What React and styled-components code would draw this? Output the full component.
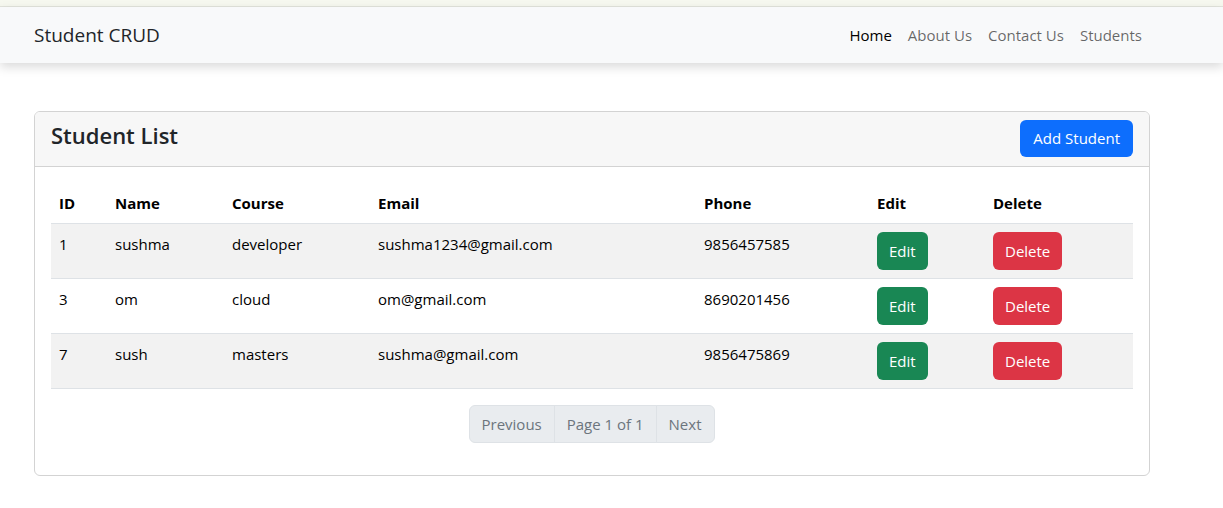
import React from 'react'
import styled, { createGlobalStyle } from 'styled-components'

const students = [
  { id: 1, name: 'sushma', course: 'developer', email: 'sushma1234@gmail.com', phone: '9856457585' },
  { id: 3, name: 'om', course: 'cloud', email: 'om@gmail.com', phone: '8690201456' },
  { id: 7, name: 'sush', course: 'masters', email: 'sushma@gmail.com', phone: '9856475869' },
]

const columns = [
  { label: 'ID', width: 56 },
  { label: 'Name', width: 117 },
  { label: 'Course', width: 146 },
  { label: 'Email', width: 326 },
  { label: 'Phone', width: 173 },
  { label: 'Edit', width: 116 },
  { label: 'Delete', width: 148 },
]

const App = () => {
  return (
    <>
      <Global />
      <S.TopStrip />
      <S.Nav>
        <S.Brand>Student CRUD</S.Brand>
        <S.Links>
          <S.Link active>Home</S.Link>
          <S.Link>About Us</S.Link>
          <S.Link>Contact Us</S.Link>
          <S.Link>Students</S.Link>
        </S.Links>
      </S.Nav>
      <S.Main>
        <S.Card>
          <S.CardHeader>
            <S.Title>Student List</S.Title>
            <S.Button variant="primary">Add Student</S.Button>
          </S.CardHeader>
          <S.CardBody>
            <S.Table>
              <colgroup>
                {columns.map(c => <col key={c.label} width={c.width} />)}
              </colgroup>
              <thead>
                <tr>
                  {columns.map(c => <S.Th key={c.label}>{c.label}</S.Th>)}
                </tr>
              </thead>
              <tbody>
                {students.map((s, i) => (
                  <S.Tr key={s.id} striped={i % 2 === 0}>
                    <S.Td>{s.id}</S.Td>
                    <S.Td>{s.name}</S.Td>
                    <S.Td>{s.course}</S.Td>
                    <S.Td>{s.email}</S.Td>
                    <S.Td>{s.phone}</S.Td>
                    <S.Td><S.Button variant="success">Edit</S.Button></S.Td>
                    <S.Td><S.Button variant="danger">Delete</S.Button></S.Td>
                  </S.Tr>
                ))}
              </tbody>
            </S.Table>
            <S.Pager>
              <S.PageItem>Previous</S.PageItem>
              <S.PageItem>Page 1 of 1</S.PageItem>
              <S.PageItem>Next</S.PageItem>
            </S.Pager>
          </S.CardBody>
        </S.Card>
      </S.Main>
    </>
  )
}

const Global = createGlobalStyle`
  body {
    margin: 0;
    background: #fff;
    font-family: "Open Sans", "Noto Sans", sans-serif;
    color: #212529;
    font-size: 15px;
  }
`

const colors = {
  primary: '#0d6efd',
  success: '#198754',
  danger: '#dc3545',
}

const S = {
  TopStrip: styled.div`
    height: 6px;
    background: #f6f8ef;
    border-bottom: 1px solid #e2e4dc;
  `,
  Nav: styled.nav`
    height: 56px;
    background: #f8f9fa;
    display: flex;
    align-items: center;
    justify-content: space-between;
    padding: 0 73px 0 34px;
    box-shadow: 0 4px 10px rgba(0, 0, 0, 0.15);
    position: relative;
  `,
  Brand: styled.span`
    font-size: 19px;
    color: #212529;
  `,
  Links: styled.div`
    display: flex;
  `,
  Link: styled.span`
    padding: 0 8px;
    font-size: 15px;
    color: ${p => (p.active ? '#000' : 'rgba(0, 0, 0, 0.6)')};
  `,
  Main: styled.main`
    padding: 48px 73px 0 34px;
  `,
  Card: styled.div`
    border: 1px solid #d3d3d3;
    border-radius: 6px;
    overflow: hidden;
  `,
  CardHeader: styled.div`
    height: 54px;
    background: #f7f7f7;
    border-bottom: 1px solid #d3d3d3;
    display: flex;
    justify-content: space-between;
    align-items: flex-start;
    padding: 0 16px;
  `,
  Title: styled.h3`
    margin: 7px 0 0;
    font-size: 22px;
    line-height: 32px;
    font-weight: 600;
  `,
  CardBody: styled.div`
    padding: 16px 16px 32px;
  `,
  Table: styled.table`
    width: 100%;
    border-collapse: collapse;
    table-layout: fixed;
    margin-bottom: 16px;
  `,
  Th: styled.th`
    text-align: left;
    padding: 8px;
    line-height: 24px;
    font-size: 15px;
    font-weight: 700;
    color: #000;
    border-bottom: 1px solid #dee2e6;
  `,
  Tr: styled.tr`
    background: ${p => (p.striped ? '#f2f2f2' : '#fff')};
    border-bottom: 1px solid #dee2e6;
  `,
  Td: styled.td`
    padding: 8px;
    height: 38px;
    vertical-align: top;
    font-size: 15px;
    color: #000;
    line-height: 24px;
  `,
  Button: styled.button`
    display: block;
    font-family: inherit;
    font-size: 15px;
    line-height: 24px;
    padding: 7px 12px;
    border: 0;
    border-radius: 6px;
    color: #fff;
    background: ${p => colors[p.variant]};
    ${p => p.variant === 'primary' && 'margin-top: 8px; padding: 6px 13px 7px;'}
  `,
  Pager: styled.div`
    display: flex;
    justify-content: center;
  `,
  PageItem: styled.span`
    background: #e9ecef;
    color: #6c757d;
    font-size: 15px;
    line-height: 24px;
    padding: 6px 12px;
    border: 1px solid #dee2e6;
    margin-left: -1px;
    &:first-child {
      border-radius: 6px 0 0 6px;
    }
    &:last-child {
      border-radius: 0 6px 6px 0;
    }
  `,
}

export default App
